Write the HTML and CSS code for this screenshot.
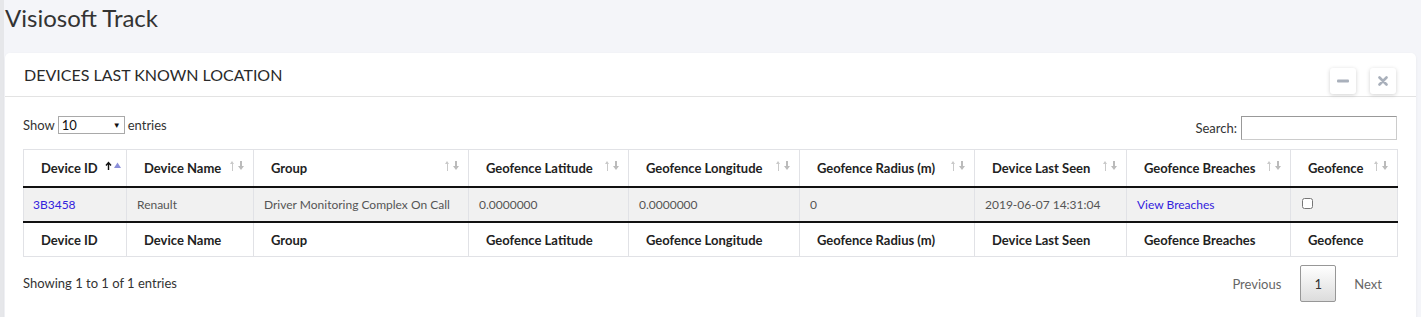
FILE: index.html
```html
<!DOCTYPE html>
<html lang="en">
<head>
  <meta charset="UTF-8">
  <title>Visiosoft Track</title>
  <link rel="stylesheet" href="styles.css">
</head>
<body>
  <div class="side"></div>
  <div class="main">
    <h1 class="app-title">Visiosoft Track</h1>

    <div class="card">
      <div class="card-head">
        <h2>DEVICES LAST KNOWN LOCATION</h2>
        <div class="tools">
          <button class="tool-btn" title="Minimize">
            <svg width="12" height="4" viewBox="0 0 12 4"><rect x="0" y="0.5" width="12" height="3" rx="1" fill="#a9b0bb"/></svg>
          </button>
          <button class="tool-btn" title="Close">
            <svg width="10" height="10" viewBox="0 0 10 10"><path d="M1.5 1.5 L8.5 8.5 M8.5 1.5 L1.5 8.5" stroke="#a9b0bb" stroke-width="2.6" stroke-linecap="round"/></svg>
          </button>
        </div>
      </div>

      <div class="card-body">
        <div class="dt-top">
          <div class="length">Show
            <span class="select">10<span class="caret">&#9660;</span></span>
            entries</div>
          <div class="search">Search: <input type="text"></div>
        </div>

        <table class="grid">
          <colgroup>
            <col style="width:103px"><col style="width:127px"><col style="width:215px">
            <col style="width:160px"><col style="width:171px"><col style="width:175px">
            <col style="width:152px"><col style="width:164px"><col style="width:107px">
          </colgroup>
          <thead>
            <tr>
              <th class="sorted">Device ID<span class="sort"><svg width="16" height="10" viewBox="0 0 16 10"><path d="M3.5 9 V2 M1 4.5 L3.5 1.5 L6 4.5" stroke="#111" stroke-width="1.4" fill="none"/><path d="M9 7 L12.5 1.5 L16 7 Z" fill="#8b8fd9"/></svg></span></th>
              <th>Device Name<span class="sort"></span></th>
              <th>Group<span class="sort"></span></th>
              <th>Geofence Latitude<span class="sort"></span></th>
              <th>Geofence Longitude<span class="sort"></span></th>
              <th>Geofence Radius (m)<span class="sort"></span></th>
              <th>Device Last Seen<span class="sort"></span></th>
              <th>Geofence Breaches<span class="sort"></span></th>
              <th>Geofence<span class="sort"></span></th>
            </tr>
          </thead>
          <tbody>
            <tr>
              <td><a href="#">3B3458</a></td>
              <td>Renault</td>
              <td>Driver Monitoring Complex On Call</td>
              <td>0.0000000</td>
              <td>0.0000000</td>
              <td>0</td>
              <td>2019-06-07 14:31:04</td>
              <td><a href="#">View Breaches</a></td>
              <td><input type="checkbox" class="check"></td>
            </tr>
          </tbody>
          <tfoot>
            <tr>
              <th>Device ID</th>
              <th>Device Name</th>
              <th>Group</th>
              <th>Geofence Latitude</th>
              <th>Geofence Longitude</th>
              <th>Geofence Radius (m)</th>
              <th>Device Last Seen</th>
              <th>Geofence Breaches</th>
              <th>Geofence</th>
            </tr>
          </tfoot>
        </table>

        <div class="dt-bottom">
          <div class="info">Showing 1 to 1 of 1 entries</div>
          <div class="pager">
            <span class="page-link">Previous</span>
            <span class="page-btn">1</span>
            <span class="page-link">Next</span>
          </div>
        </div>
      </div>
    </div>
  </div>
</body>
</html>
```

FILE: styles.css
```css
body {
  margin: 0;
  background: #f4f5f9;
  font-family: "Source Sans Pro", Lato, "Noto Sans", sans-serif;
  color: #333;
  display: flex;
  min-height: 317px;
}
.side {
  width: 4px;
  background: #e6e7ea;
  flex: none;
}
.main {
  flex: 1;
  padding: 0 6px 0 1px;
}
.app-title {
  margin: 0;
  height: 53px;
  padding-top: 3px;
  box-sizing: border-box;
  font-size: 24px;
  font-weight: 400;
  color: #333;
}
.card {
  background: #fff;
  border-radius: 5px;
  box-shadow: 0 1px 3px rgba(0,0,0,0.06);
  min-height: 270px;
}
.card-head {
  display: flex;
  justify-content: space-between;
  align-items: center;
  height: 43px;
  padding: 0 20px 0 19px;
  border-bottom: 1px solid #e3e3e3;
}
.card-head h2 {
  margin: 0;
  font-size: 16px;
  font-weight: 400;
  color: #2a2a2a;
  margin-top: -1px;
}
.tools {
  display: flex;
  gap: 14px;
  margin-top: 12px;
}
.tool-btn {
  width: 26px;
  height: 26px;
  padding: 0;
  border: none;
  background: #fff;
  border-radius: 3px;
  box-shadow: 0 1px 4px rgba(0,0,0,0.18);
  display: flex;
  align-items: center;
  justify-content: center;
}
.card-body {
  padding: 19px 18px 0 18px;
}
.dt-top {
  display: flex;
  justify-content: space-between;
  font-size: 13px;
  height: 33px;
}
.length {
  display: flex;
  align-items: flex-start;
  gap: 3px;
  line-height: 18px;
}
.select {
  display: inline-flex;
  justify-content: space-between;
  align-items: center;
  width: 67px;
  height: 18px;
  box-sizing: border-box;
  border: 1px solid #a9a9a9;
  padding: 0 3px;
  font-size: 13px;
  color: #111;
}
.caret {
  font-size: 8px;
  color: #111;
}
.search {
  display: flex;
  gap: 4px;
  padding-top: 5px;
  line-height: 14px;
}
.search input {
  width: 156px;
  height: 24px;
  box-sizing: border-box;
  border: 1px solid #ccc;
  border-top-color: #999;
  border-left-color: #999;
  margin-top: -5px;
  margin-right: 1px;
}
.grid {
  width: 1374px;
  border-collapse: collapse;
  table-layout: fixed;
  font-size: 13px;
}
.grid th {
  text-align: left;
  font-weight: 700;
  color: #222;
  border: 1px solid #e1e2e6;
  padding: 0 17px;
  height: 36px;
  position: relative;
}
.grid thead th {
  border-bottom: 2px solid #111;
}
.grid tfoot th {
  border-top: 2px solid #111;
  height: 33px;
}
.grid td {
  background: #f1f1f1;
  font-size: 12px;
  color: #555;
  padding: 0 9px;
  height: 33px;
  border-left: 1px solid #e1e2e6;
  border-right: 1px solid #e1e2e6;
}
.grid td + td {
  padding-left: 10px;
}
.grid a {
  color: #3322dd;
  text-decoration: none;
}
.sort {
  position: absolute;
  right: 8px;
  top: 11px;
  width: 16px;
  height: 10px;
  background:
    linear-gradient(#c9c9c9, #c9c9c9) 3px 2px / 1px 8px no-repeat,
    linear-gradient(#bbb, #bbb) 11px 0 / 2px 7px no-repeat;
}
.sort::before {
  content: "";
  position: absolute;
  left: 1px;
  top: 0;
  border: 2.5px solid transparent;
  border-bottom: 3px solid #c9c9c9;
  border-top: none;
}
.sort::after {
  content: "";
  position: absolute;
  left: 8.5px;
  top: 5px;
  border: 3.5px solid transparent;
  border-top: 4px solid #bbb;
  border-bottom: none;
}
th.sorted .sort {
  background: none;
  top: 8px;
  right: 5px;
}
th.sorted .sort::before,
th.sorted .sort::after {
  display: none;
}
.check {
  margin: 0 0 4px 1px;
  width: 11px;
  height: 11px;
}
.dt-bottom {
  display: flex;
  justify-content: space-between;
  align-items: center;
  padding-top: 8px;
  font-size: 13px;
}
.info {
  color: #333;
  margin-top: -1px;
}
.pager {
  display: flex;
  align-items: center;
  margin-right: 0;
}
.page-link {
  color: #666;
  padding: 0 17px 0 10px;
}
.page-link:last-child {
  padding: 0 16px 0 18px;
}
.page-btn {
  width: 36px;
  height: 37px;
  box-sizing: border-box;
  border: 1px solid #979797;
  border-radius: 2px;
  background: linear-gradient(#fff, #dcdcdc);
  display: flex;
  align-items: center;
  justify-content: center;
  color: #333;
  margin-left: 2px;
}
```
